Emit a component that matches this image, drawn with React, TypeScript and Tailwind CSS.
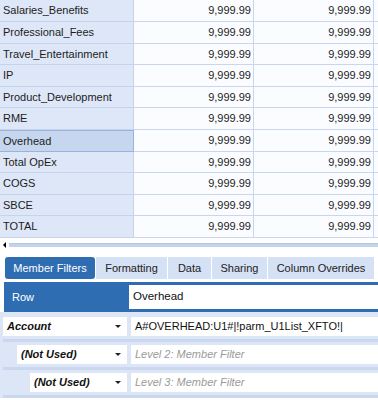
const rows: { label: string; h: string; selected?: boolean }[] = [
  { label: 'Salaries_Benefits', h: 'h-[22px]' },
  { label: 'Professional_Fees', h: 'h-[22px]' },
  { label: 'Travel_Entertainment', h: 'h-[21px]' },
  { label: 'IP', h: 'h-[22px]' },
  { label: 'Product_Development', h: 'h-[21px]' },
  { label: 'RME', h: 'h-[22px]' },
  { label: 'Overhead', h: 'h-[22px]', selected: true },
  { label: 'Total OpEx', h: 'h-[21px]' },
  { label: 'COGS', h: 'h-[22px]' },
  { label: 'SBCE', h: 'h-[21px]' },
  { label: 'TOTAL', h: 'h-[22px]' },
]

const tabs = ['Formatting', 'Data', 'Sharing', 'Column Overrides']

const tabWidths: Record<string, string> = {
  Formatting: 'w-[71px]',
  Data: 'w-[43px]',
  Sharing: 'w-[55px]',
  'Column Overrides': 'w-[106px]',
}

function Dropdown({ value, indent }: { value: string; indent: string }) {
  return (
    <div className={`${indent} flex-1 h-[19px] bg-white flex items-center justify-between pl-[4px] pr-[6px]`}>
      <span className="font-bold italic text-[#111]">{value}</span>
      <span className="w-0 h-0 border-x-[3px] border-x-transparent border-t-[3px] border-t-[#222]" />
    </div>
  )
}

function FilterRow({ value, indent, text, placeholder }: { value: string; indent: string; text: string; placeholder?: boolean }) {
  return (
    <div className="h-[28px] flex items-center border-b-[3px] border-[#c9d7ef]">
      <div className="w-[124px] flex">
        <Dropdown value={value} indent={indent} />
      </div>
      <div className="ml-[4px] flex-1 h-[19px] bg-white flex items-center pl-[4px]">
        {placeholder ? (
          <span className="italic text-[#9a9a9a]">{text}</span>
        ) : (
          <span className="text-[#111]">{text}</span>
        )}
      </div>
    </div>
  )
}

export default function App() {
  return (
    <div className="w-[378px] h-[400px] overflow-hidden bg-white font-['Liberation_Sans',Arial,sans-serif] text-[11px] text-[#1c1c1c]">
      {/* grid */}
      <div className="bg-[#fbfcff]">
        {rows.map((r) => (
          <div key={r.label} className={`${r.h} flex`}>
            <div
              className={
                r.selected
                  ? 'w-[134px] flex items-center pl-[3px] bg-[#c6d6ef] border border-[#9bb3dc] border-l-0'
                  : 'w-[134px] flex items-center pl-[3px] bg-[#dee7f7] border-b border-r border-[#c5d3ec]'
              }
            >
              {r.label}
            </div>
            <div className="w-[120px] flex items-center justify-end pr-[2px] border-b border-r border-[#c9d6ee]">9,999.99</div>
            <div className="w-[120px] flex items-center justify-end pr-[2px] border-b border-r border-[#c9d6ee]">9,999.99</div>
            <div className="flex-1 border-b border-[#c9d6ee]" />
          </div>
        ))}
      </div>

      {/* horizontal scrollbar */}
      <div className="h-[12px] flex items-center pt-[1px]">
        <span className="ml-[3px] w-0 h-0 border-y-[3px] border-y-transparent border-r-[3px] border-r-black" />
        <div className="flex-1 h-[4px] ml-[3px] bg-[#c4d2eb] border-t border-[#b5c6e4]" />
      </div>

      {/* tabs */}
      <div className="pt-[7px] pl-[5px] flex gap-[1px]">
        <div className="w-[90px] h-[22px] rounded-[3px] bg-[#2f6db3] text-white flex items-center justify-center">Member Filters</div>
        {tabs.map((t) => (
          <div key={t} className={`${tabWidths[t]} h-[22px] bg-[#d5e1f5] flex items-center justify-center text-[#222]`}>
            {t}
          </div>
        ))}
      </div>

      {/* row selector */}
      <div className="mt-[3px] ml-[4px] h-[30px] bg-[#2f6db3] flex items-center">
        <span className="w-[125px] pl-[8px] text-white">Row</span>
        <div className="flex-1 h-[24px] bg-white flex items-center pl-[4px] text-[11.5px] text-[#111]">Overhead</div>
      </div>

      {/* member filters */}
      <div className="bg-[#dce6f7] pl-[3px] pt-[2px]">
        <FilterRow value="Account" indent="ml-0" text="A#OVERHEAD:U1#|!parm_U1List_XFTO!|" />
        <FilterRow value="(Not Used)" indent="ml-[14px]" text="Level 2: Member Filter" placeholder />
        <FilterRow value="(Not Used)" indent="ml-[27px]" text="Level 3: Member Filter" placeholder />
      </div>
    </div>
  )
}
